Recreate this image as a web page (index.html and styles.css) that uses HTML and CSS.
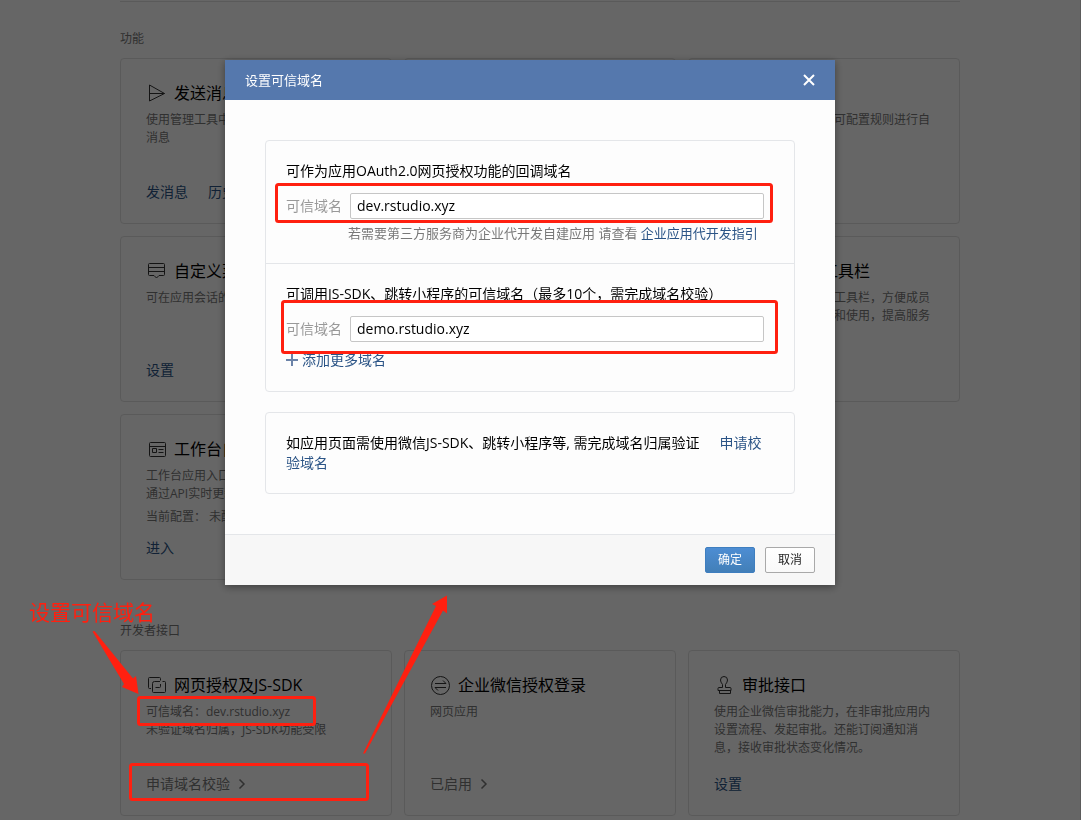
FILE: index.html
```html
<!DOCTYPE html>
<html lang="zh-CN">
<head>
<meta charset="utf-8">
<title>设置可信域名</title>
<link rel="stylesheet" href="styles.css">
</head>
<body>
<div class="page">
  <main class="content">
    <section class="group">
      <h2 class="group-title">功能</h2>
      <div class="cards">
        <article class="card">
          <h3 class="card-title"><svg class="icon" viewBox="0 0 20 20"><path d="M3.500 2v16L18.500 10.500zM3.500 10.500h15"/></svg>发送消息</h3>
          <p class="card-text">使用管理工具中的素材库向企业成员群发消息</p>
          <div class="card-links"><a href="#">发消息</a><a href="#">历史消息</a></div>
        </article>
        <article class="card">
          <h3 class="card-title">接收消息</h3>
        </article>
        <article class="card">
          <h3 class="card-title">自动回复</h3>
          <p class="card-text">成员向应用发消息时，可配置规则进行自动回复</p>
        </article>
        <article class="card">
          <h3 class="card-title"><svg class="icon" viewBox="0 0 20 20"><path d="M3.500 2.500h14q1 0 1 1v10q0 1-1 1h-4.500l-2.500 2.500-2.500-2.500h-4.500q-1 0-1-1v-10q0-1 1-1zM2.500 6.500h16M2.500 10.500h16"/></svg>自定义菜单</h3>
          <p class="card-text">可在应用会话的底部配置快捷操作菜单</p>
          <div class="card-links"><a href="#">设置</a></div>
        </article>
        <article class="card">
          <h3 class="card-title">应用主页</h3>
        </article>
        <article class="card">
          <h3 class="card-title"><svg class="icon" viewBox="0 0 20 20"><path d="M3.500 3.500h14v13h-14z"/></svg>配置到聊天工具栏</h3>
          <p class="card-text">可将应用页面配置聊天工具栏，方便成员在外部会话中快速查看和使用，提高服务效率</p>
        </article>
        <article class="card">
          <h3 class="card-title"><svg class="icon" viewBox="0 0 20 20"><path d="M5 3.500h13.500q1 0 1 1v12q0 1-1 1h-14q-1 0-1-1v-12q0-1 1-1zM3.500 7.500h16M6.500 9.500h4v4h-4zM12.500 10.500h5M12.500 13.500h5"/></svg>工作台自定义</h3>
          <p class="card-text">工作台应用入口可自定义展示内容，并可通过API实时更新展示数据</p>
          <p class="card-text card-status">当前配置： 未配置</p>
          <div class="card-links"><a href="#">进入</a></div>
        </article>
      </div>
    </section>
    <section class="group">
      <h2 class="group-title">开发者接口</h2>
      <div class="cards">
        <article class="card">
          <h3 class="card-title"><svg class="icon" viewBox="0 0 20 20"><path d="M5 13.500h-1.500q-1 0-1-1v-9q0-1 1-1h10q1 0 1 1v2M9.500 12.500h4q1 0 1-1V9M16.500 6.500h2q1 0 1 1v9q0 1-1 1h-11q-1 0-1-1v-8q0-2 2-2h5.500"/></svg>网页授权及JS-SDK</h3>
          <p class="card-text">可信域名：dev.rstudio.xyz<br>未验证域名归属，JS-SDK功能受限</p>
          <div class="card-links"><a class="muted" href="#">申请域名校验<svg class="chevron" viewBox="0 0 8 12"><path d="M1.500 1.500 6 6l-4.500 4.500"/></svg></a></div>
        </article>
        <article class="card">
          <h3 class="card-title"><svg class="icon" viewBox="0 0 20 20"><circle cx="10.500" cy="10.500" r="9"/><path d="M5 8.500h11l-3-3M16 12.500H5l3 3"/></svg>企业微信授权登录</h3>
          <p class="card-text">网页应用</p>
          <div class="card-links"><a class="muted" href="#">已启用<svg class="chevron" viewBox="0 0 8 12"><path d="M1.500 1.500 6 6l-4.500 4.500"/></svg></a></div>
        </article>
        <article class="card">
          <h3 class="card-title"><svg class="icon" viewBox="0 0 20 20"><path d="M8.500 12.500V9.500Q6.500 7 6.500 5a3.500 3.500 0 0 1 7 0q0 2-2 4.500v3h4.500q1 0 1 1v2h-13v-2q0-1 1-1zM5.500 15.500v3h11v-3"/></svg>审批接口</h3>
          <p class="card-text">使用企业微信审批能力，在非审批应用内设置流程、发起审批。还能订阅通知消息，接收审批状态变化情况。</p>
          <div class="card-links"><a href="#">设置</a></div>
        </article>
      </div>
    </section>
  </main>
</div>

<div class="overlay">
  <div class="dialog" role="dialog" aria-labelledby="dialog-title">
    <header class="dialog-head">
      <h1 class="dialog-title" id="dialog-title">设置可信域名</h1>
      <button class="close" type="button" aria-label="关闭"><svg viewBox="0 0 12 12"><path d="M1 1l10 10M11 1L1 11"/></svg></button>
    </header>
    <div class="dialog-body">
      <div class="panel">
        <section class="panel-section">
          <h2 class="panel-title">可作为应用OAuth2.0网页授权功能的回调域名</h2>
          <div class="field">
            <label for="oauth-domain">可信域名</label>
            <input id="oauth-domain" type="text" value="dev.rstudio.xyz">
          </div>
          <p class="hint">若需要第三方服务商为企业代开发自建应用 请查看 <a href="#">企业应用代开发指引</a></p>
        </section>
        <section class="panel-section">
          <h2 class="panel-title">可调用JS-SDK、跳转小程序的可信域名（最多10个，需完成域名校验）</h2>
          <div class="field">
            <label for="js-domain">可信域名</label>
            <input id="js-domain" type="text" value="demo.rstudio.xyz">
          </div>
          <a class="add" href="#"><svg viewBox="0 0 12 12"><path d="M6 0v12M0 6h12"/></svg>添加更多域名</a>
        </section>
      </div>
      <div class="panel">
        <p class="panel-section notice">如应用页面需使用微信JS-SDK、跳转小程序等, 需完成域名归属验证<a class="verify" href="#">申请校验域名</a></p>
      </div>
    </div>
    <footer class="dialog-foot">
      <button class="btn btn-primary" type="button">确定</button>
      <button class="btn" type="button">取消</button>
    </footer>
  </div>
</div>

<div class="marks">
  <svg class="marks-shapes" width="1081" height="820" viewBox="0 0 1081 820">
    <g class="frame">
      <rect x="276.500" y="184.500" width="495" height="37" rx="2"/>
      <rect x="282.500" y="301.500" width="494" height="51" rx="2"/>
      <rect x="138.500" y="697.500" width="176" height="27" rx="2"/>
      <rect x="130.500" y="764.500" width="237" height="35" rx="2"/>
    </g>
    <path class="arrow" d="M92.500 631.500L124 684l-2 3 16.500 7-2.500-18-3 2.500L94.500 631z"/>
    <path class="arrow" d="M363 753.500L436 606l-4-2 15-8.500 0 18-4-3L365 753.500z"/>
  </svg>
  <span class="marks-text">设置可信域名</span>
</div>
</body>
</html>
```
FILE: styles.css
```css
* { box-sizing: border-box; }

body {
  margin: 0;
  background: #fff;
  color: #000;
  font-family: "Open Sans", "Noto Sans CJK SC", sans-serif;
  font-size: 14px;
  line-height: 20px;
}

h1, h2, h3, p { margin: 0; font-weight: 400; }
a { color: #2b5486; text-decoration: none; }
svg { fill: none; stroke: currentColor; }

.page {
  min-height: 100vh;
  padding-top: 1px;
  border-right: 1px solid #e4e4e4;
}
.content {
  max-width: 840px;
  margin: 0 auto;
  padding-top: 27px;
  border-top: 1px solid #e0e0e0;
}
.group + .group { margin-top: 41px; }
.group-title {
  margin-bottom: 9px;
  color: #787878;
  font-size: 12px;
  line-height: 20px;
}
.cards {
  display: grid;
  grid-template-columns: repeat(3, 1fr);
  gap: 12px;
}
.card {
  display: flex;
  flex-direction: column;
  min-height: 166px;
  padding: 22px 26px 21px 25px;
  border: 1px solid #e0e0e0;
  border-radius: 4px;
}
.card-title {
  display: flex;
  align-items: center;
  gap: 8px;
  margin-bottom: 6px;
  font-size: 16px;
  line-height: 24px;
}
.icon { width: 20px; height: 20px; color: #333; }
.card-text {
  color: #787878;
  font-size: 12px;
  line-height: 18px;
}
.card-status { margin-top: 5px; }
.card-links {
  display: flex;
  gap: 20px;
  margin-top: auto;
}
.muted { color: #787878; }
.chevron {
  width: 8px;
  height: 12px;
  margin-left: 8px;
  vertical-align: -1px;
  stroke-width: 1.5;
}

.overlay {
  position: fixed;
  inset: 0;
  display: flex;
  justify-content: center;
  align-items: flex-start;
  padding: 60px 21px 0 0;
  background: rgba(0, 0, 0, 0.6);
}
.dialog {
  width: 100%;
  max-width: 610px;
  background: #fdfdfd;
  box-shadow: 0 2px 8px rgba(0, 0, 0, 0.4);
}
.dialog-head {
  display: flex;
  align-items: center;
  justify-content: space-between;
  height: 40px;
  padding: 0 20px;
  background: #5578ad;
  color: #fff;
}
.dialog-title { font-size: 13px; }
.close {
  display: flex;
  padding: 0;
  border: 0;
  background: none;
  color: #fff;
}
.close svg { width: 12px; height: 12px; stroke-width: 2; }
.dialog-body {
  display: flex;
  flex-direction: column;
  gap: 20px;
  padding: 40px;
}
.panel { border: 1px solid #e4e6e9; border-radius: 4px; }
.panel-section { padding: 20px 30px 20px 20px; }
.panel-section + .panel-section { border-top: 1px solid #e4e6e9; }
.panel-title { margin-bottom: 12px; font-size: 14px; }
.field {
  display: flex;
  align-items: center;
  gap: 8px;
}
.field label { color: #999; }
.field input {
  flex: 1;
  min-width: 0;
  height: 26px;
  padding: 0 6px 2px;
  border: 1px solid #c6c6c6;
  border-radius: 2px;
  background: #fff;
  color: #000;
  font: inherit;
}
.hint {
  margin-top: 4px;
  padding-left: 62px;
  color: #787878;
  font-size: 13px;
  white-space: nowrap;
}
.add {
  display: flex;
  align-items: center;
  gap: 4px;
  margin: 8px 0 1px;
}
.add svg { width: 12px; height: 12px; color: #6b83a8; stroke-width: 2; }
.verify { margin-left: 20px; }
.dialog-foot {
  display: flex;
  justify-content: flex-end;
  gap: 10px;
  padding: 12px 20px;
  border-top: 1px solid #e4e6e9;
  background: #f7f7f7;
}
.btn {
  width: 50px;
  height: 26px;
  padding: 0;
  border: 1px solid #a9a9a9;
  border-radius: 2px;
  background: linear-gradient(#fff, #f9f9f9);
  color: #222;
  font: inherit;
  font-size: 12px;
}
.btn-primary {
  border-color: #3e7ebf;
  background: linear-gradient(#4d8dd3, #427fb8);
  color: #fff;
}

/* Annotation layer that sits on top of the whole page */
.marks {
  position: absolute;
  top: 0;
  left: 0;
  color: #ff2010;
  pointer-events: none;
}
.marks-shapes { display: block; }
.frame { stroke-width: 3; }
.arrow { fill: currentColor; stroke: none; }
.marks-text {
  position: absolute;
  top: 599px;
  left: 29px;
  font-size: 21px;
  line-height: 26px;
  white-space: nowrap;
}
```
